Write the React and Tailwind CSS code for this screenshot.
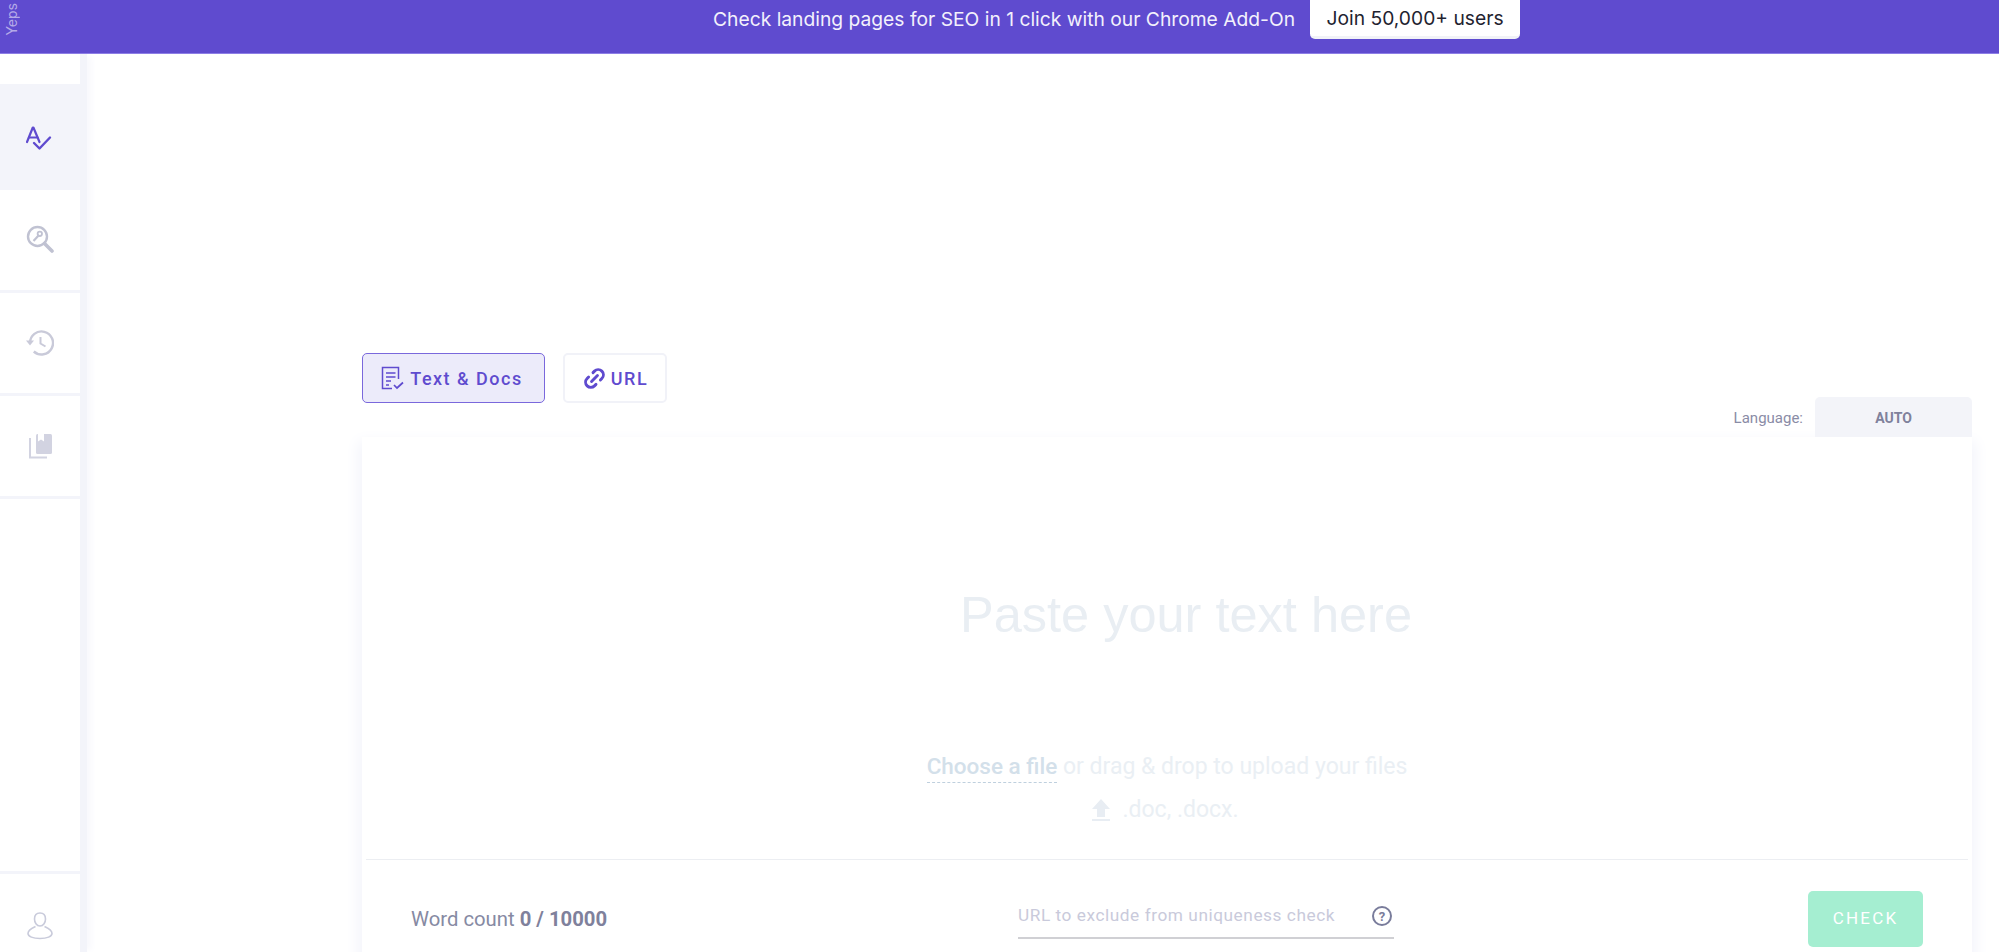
import { Link2 } from 'lucide-react'

const Row = ({ active, children, className = '' }) => (
  <div className={`shrink-0 flex items-center justify-center ${active ? 'bg-[#f3f4fa]' : ''} ${className}`}>{children}</div>
)

function App() {
  return (
    <div className="h-[952px] w-[1999px] overflow-hidden bg-white font-['Roboto',sans-serif] flex flex-col">
      {/* Banner */}
      <header className="relative h-[54px] shrink-0 bg-[#5f4bcf] border-b border-[#8d7ee6] flex items-start pl-[713px]">
        <span className="absolute left-[4px] top-[3px] text-[14px] leading-[16px] text-[#b5aae8] font-['Inter',sans-serif] [writing-mode:vertical-rl] rotate-180">Yeps</span>
        <div className="flex items-center h-[39px] gap-[15px] font-['Inter',sans-serif] text-[19.25px]">
          <span className="text-[#f3f1fc] whitespace-nowrap">Check landing pages for SEO in 1 click with our Chrome Add-On</span>
          <button className="h-[39px] w-[210px] bg-white rounded-b-[5px] border-b-[3px] border-[#f1f2f7] text-[#1f2330]">Join 50,000+ users</button>
        </div>
      </header>

      <div className="flex flex-1 min-h-0">
        {/* Sidebar */}
        <aside className="w-[80px] shrink-0 bg-white flex flex-col pt-[30px] shadow-[7px_0_0_0_#f3f4fa,14px_0_6px_-2px_#f9f9fd]">
          <Row active className="h-[106px]">
            <svg width="26" height="26" viewBox="0 0 26 26" fill="none" stroke="#5f4bcf" strokeWidth="2.2" strokeLinecap="round" strokeLinejoin="round" className="ml-[-2px] mt-[4px]">
              <path d="M1 16 6.800 1.500h.6L13.500 16" />
              <path d="M3 11.500h8.500" />
              <path d="M8 17l5.500 5.500L24 11.500" strokeWidth="2.400" />
            </svg>
          </Row>
          <Row className="h-[103px] border-b-[3px] border-[#f3f4fa]">
            <svg width="28" height="28" viewBox="0 0 28 28" fill="none" stroke="#c0c2d2" className="mt-[-2px]">
              <circle cx="11.500" cy="11.500" r="9.500" strokeWidth="2.400" />
              <path d="M18.500 18.500 26 26" strokeWidth="3.600" strokeLinecap="round" />
              <path d="M7.500 16l5.500-6" strokeWidth="2.200" />
              <circle cx="13.800" cy="8.800" r="2.200" strokeWidth="1.800" />
            </svg>
          </Row>
          <Row className="h-[103px] border-b-[3px] border-[#f3f4fa]">
            <svg width="28" height="26" viewBox="0 0 28 26" fill="none" stroke="#c9cad9" strokeWidth="2.400">
              <path d="M4 13A11.500 11.500 0 1 1 7.800 21.500" />
              <path d="M0 10.500h8L4 15.500z" fill="#c9cad9" stroke="none" />
              <path d="M14.500 7v6.500l5 3" strokeWidth="2" />
            </svg>
          </Row>
          <Row className="h-[103px] border-b-[3px] border-[#f3f4fa]">
            <svg width="24" height="26" viewBox="0 0 24 26">
              <rect x="8" y="1" width="16" height="20" rx="1.500" fill="#d2d3e1" />
              <path d="M10 1h6v7.500l-3-2-3 2z" fill="#fff" />
              <path d="M2 5v19.500h17" fill="none" stroke="#d2d3e1" strokeWidth="2" />
            </svg>
          </Row>
          <div className="h-[375px] shrink-0 border-b-[3px] border-[#f3f4fa]" />
          <Row className="h-[103px]">
            <svg width="26" height="28" viewBox="0 0 26 28" fill="none" stroke="#c9cbdb" strokeWidth="1.600">
              <path d="M13 1c3.500 0 5.500 2.500 5.500 6s-2 7-5.500 7-5.500-3.500-5.500-7S9.500 1 13 1z" />
              <path d="M8.500 14.500C5 16 1 17.500 1 21.500c0 3 5 5 12 5s12-2 12-5c0-4-4-5.500-7.500-7" />
            </svg>
          </Row>
        </aside>

        {/* Main */}
        <main className="flex-1 min-w-0 pl-[282px] pr-[27px] pt-[299px]">
          <div className="flex gap-[18px]">
            <button className="h-[50px] w-[183px] flex items-center justify-center gap-[6px] rounded-[5px] border border-[#7a68dc] bg-[#ecebfa] text-[#5f4bcf] text-[18px] font-medium tracking-[1.500px]">
              <svg width="23" height="24" viewBox="0 0 23 24" fill="none" stroke="#5f4bcf" strokeWidth="1.500" className="ml-[-3px]">
                <path d="M11 22.500H1.500v-21h16V13" />
                <path d="M5 7h9.500M5 11h9.500M5 15h5M5 19h3" />
                <path d="M13 19l3 3 6-5.500" strokeWidth="1.700" />
              </svg>
              Text &amp; Docs
            </button>
            <button className="h-[50px] w-[104px] flex items-center justify-center gap-[4px] rounded-[5px] border-2 border-[#f1f2f8] bg-white text-[#5f4bcf] text-[18px] font-medium tracking-[1.500px]">
              <Link2 size={25} strokeWidth={2.800} className="-rotate-45" />
              URL
            </button>
          </div>

          <div className="flex justify-end items-center gap-[12px] mt-[-6px] h-[40px]">
            <span className="text-[15px] text-[#8a8ca6] pt-[2px]">Language:</span>
            <div className="w-[157px] h-[40px] rounded-t-[5px] bg-[#f3f4f9] flex items-center justify-center pt-[2px] text-[14px] font-bold text-[#7f819c]">AUTO</div>
          </div>

          <section className="h-[560px] bg-white shadow-[0_8px_14px_4px_#f3f4fb] px-[4px] flex flex-col">
            <div className="h-[422px] flex flex-col items-center">
              <p className="mt-[150px] ml-[38px] font-['Liberation_Sans',sans-serif] text-[50.500px] leading-[56px] text-[#e9eef3]">Paste your text here</p>
              <p className="mt-[108px] text-[23px] leading-[30px] text-[#eaeff4]">
                <span className="font-medium text-[22.500px] text-[#d3e0ea] border-b border-dashed border-[#bfd0de] pb-[3px]">Choose a file</span> or drag &amp; drop to upload your files
              </p>
              <div className="mt-[14px] flex items-center gap-[11px] text-[23px] leading-[28px] text-[#eaeff4]">
                <svg width="20" height="24" viewBox="0 0 20 24" fill="#e8edf3" className="ml-[-4px]">
                  <path d="M10 1 19 11h-5v8H6v-8H1z" />
                  <path d="M1 21h18v2H1z" />
                </svg>
                .doc, .docx.
              </div>
            </div>
            <div className="border-t border-[#eceef2] pt-[31px] pl-[45px] pr-[45px]">
              <div className="h-[56px] flex items-center">
                <span className="w-[607px] text-[20.300px] text-[#868aa3]">Word count <b className="font-bold text-[#7f819c]">0 / 10000</b></span>
                <div className="w-[376px] h-[47px] self-start mt-[1px] pt-[3px] border-b-2 border-[#d0d0d4] flex items-center justify-between pr-[2px]">
                  <span className="text-[17.250px] tracking-[0.55px] text-[#c9cadb]">URL to exclude from uniqueness check</span>
                  <span className="w-[20px] h-[20px] rounded-full border-2 border-[#797c9b] text-[#797c9b] text-[13px] font-bold leading-none flex items-center justify-center">?</span>
                </div>
                <button className="ml-auto w-[115px] h-[56px] rounded-[5px] bg-[#a5eed1] text-white text-[17px] tracking-[2.200px]">CHECK</button>
              </div>
            </div>
          </section>
        </main>
      </div>
    </div>
  )
}

export default App
